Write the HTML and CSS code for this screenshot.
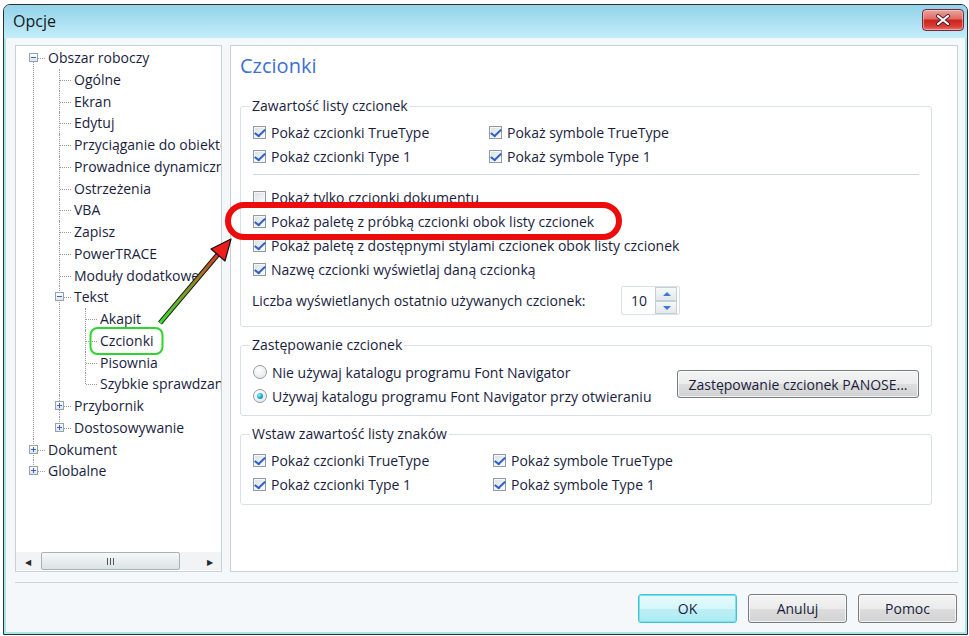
FILE: index.html
```html
<!DOCTYPE html>
<html lang="pl">
<head>
  <meta charset="UTF-8" />
  <title>Opcje</title>
  <link rel="stylesheet" href="styles.css">
</head>
<body>

  <div class="window">
    <div class="titlebar">
      <span class="title">Opcje</span>
      <button class="close-btn" aria-label="Zamknij">
        <svg width="16" height="12" viewBox="0 0 16 12">
          <path d="M3 2 L13 10 M13 2 L3 10" stroke="#4a2030" stroke-width="4" stroke-linecap="round"/>
          <path d="M3 2 L13 10 M13 2 L3 10" stroke="#ffffff" stroke-width="2.2" stroke-linecap="round"/>
        </svg>
      </button>
    </div>

    <div class="client">
      <div class="panes">

        <!-- Drzewo kategorii -->
        <div class="tree-panel">
          <div class="tree-view">
            <ul class="tree">
              <li>
                <div class="row"><span class="exp minus"></span>Obszar roboczy</div>
                <ul>
                  <li><div class="row">Ogólne</div></li>
                  <li><div class="row">Ekran</div></li>
                  <li><div class="row">Edytuj</div></li>
                  <li><div class="row">Przyciąganie do obiektów</div></li>
                  <li><div class="row">Prowadnice dynamiczne</div></li>
                  <li><div class="row">Ostrzeżenia</div></li>
                  <li><div class="row">VBA</div></li>
                  <li><div class="row">Zapisz</div></li>
                  <li><div class="row">PowerTRACE</div></li>
                  <li><div class="row">Moduły dodatkowe</div></li>
                  <li>
                    <div class="row"><span class="exp minus"></span>Tekst</div>
                    <ul>
                      <li><div class="row">Akapit</div></li>
                      <li><div class="row">Czcionki</div></li>
                      <li><div class="row">Pisownia</div></li>
                      <li><div class="row">Szybkie sprawdzanie</div></li>
                    </ul>
                  </li>
                  <li><div class="row"><span class="exp plus"></span>Przybornik</div></li>
                  <li><div class="row"><span class="exp plus"></span>Dostosowywanie</div></li>
                </ul>
              </li>
              <li><div class="row"><span class="exp plus"></span>Dokument</div></li>
              <li><div class="row"><span class="exp plus"></span>Globalne</div></li>
            </ul>
          </div>
          <div class="hscroll">
            <span class="arrow">&#9664;</span>
            <span class="thumb"><span class="grip"></span></span>
            <span class="arrow right">&#9654;</span>
          </div>
        </div>

        <!-- Strona ustawień -->
        <div class="page">
          <h1>Czcionki</h1>

          <fieldset class="group">
            <legend>Zawartość listy czcionek</legend>
            <div class="check-grid">
              <label class="check on"><span class="box"></span>Pokaż czcionki TrueType</label>
              <label class="check on"><span class="box"></span>Pokaż symbole TrueType</label>
              <label class="check on"><span class="box"></span>Pokaż czcionki Type 1</label>
              <label class="check on"><span class="box"></span>Pokaż symbole Type 1</label>
            </div>
            <div class="divider"></div>
            <label class="check"><span class="box"></span>Pokaż tylko czcionki dokumentu</label>
            <label class="check on"><span class="box"></span>Pokaż paletę z próbką czcionki obok listy czcionek</label>
            <label class="check on"><span class="box"></span>Pokaż paletę z dostępnymi stylami czcionek obok listy czcionek</label>
            <label class="check on"><span class="box"></span>Nazwę czcionki wyświetlaj daną czcionką</label>
            <div class="count-row">
              <span class="count-label">Liczba wyświetlanych ostatnio używanych czcionek:</span>
              <div class="spinner">
                <span class="spin-value">10</span>
                <div class="spin-buttons">
                  <span class="spin up"></span>
                  <span class="spin down"></span>
                </div>
              </div>
            </div>
          </fieldset>

          <fieldset class="group">
            <legend>Zastępowanie czcionek</legend>
            <div class="subst-row">
              <div class="radios">
                <label class="radio"><span class="dot"></span>Nie używaj katalogu programu Font Navigator</label>
                <label class="radio on"><span class="dot"></span>Używaj katalogu programu Font Navigator przy otwieraniu</label>
              </div>
              <button class="btn panose">Zastępowanie czcionek PANOSE...</button>
            </div>
          </fieldset>

          <fieldset class="group">
            <legend>Wstaw zawartość listy znaków</legend>
            <div class="check-grid wide">
              <label class="check on"><span class="box"></span>Pokaż czcionki TrueType</label>
              <label class="check on"><span class="box"></span>Pokaż symbole TrueType</label>
              <label class="check on"><span class="box"></span>Pokaż czcionki Type 1</label>
              <label class="check on"><span class="box"></span>Pokaż symbole Type 1</label>
            </div>
          </fieldset>
        </div>
      </div>

      <div class="separator"></div>

      <div class="buttons">
        <button class="btn default">OK</button>
        <button class="btn">Anuluj</button>
        <button class="btn">Pomoc</button>
      </div>
    </div>
  </div>

  <!-- Adnotacje na zrzucie -->
  <svg class="marks" width="969" height="636" viewBox="0 0 969 636">
    <defs>
      <linearGradient id="arrowGrad" x1="160" y1="323" x2="222" y2="250" gradientUnits="userSpaceOnUse">
        <stop offset="0" stop-color="#38e02a"/>
        <stop offset="0.55" stop-color="#8c8a26"/>
        <stop offset="1" stop-color="#e0301c"/>
      </linearGradient>
    </defs>
    <rect x="228" y="205" width="391" height="32" rx="16" fill="none" stroke="#ec0c0c" stroke-width="6"/>
    <rect x="90.5" y="328" width="72" height="26" rx="7" fill="none" stroke="#30d42e" stroke-width="2"/>
    <line x1="160" y1="323" x2="220" y2="252" stroke="#111" stroke-width="5"/>
    <line x1="160" y1="323" x2="220" y2="252" stroke="url(#arrowGrad)" stroke-width="3"/>
    <polygon points="231,239 225,261 211,249" fill="#ee1c1c" stroke="#111" stroke-width="1.2" stroke-linejoin="round"/>
  </svg>

</body>
</html>
```

FILE: styles.css
```css
* {
  margin: 0;
  padding: 0;
  box-sizing: border-box;
}

body {
  background: #ffffff;
  font-family: 'Open Sans', 'Noto Sans', sans-serif;
  font-size: 14px;
  color: #1a1d3e;
  width: 969px;
  height: 636px;
  overflow: hidden;
  position: relative;
}

/* Okno */
.window {
  margin: 4px 0 0 3px;
  width: 965px;
  height: 631px;
  border: 1px solid #2a3034;
  border-radius: 7px 7px 0 0;
  background: #a9e6ec;
  display: flex;
  flex-direction: column;
}

.titlebar {
  height: 33px;
  flex: none;
  border-radius: 6px 6px 0 0;
  background: linear-gradient(#92d3ea, #c3edf9);
  display: flex;
  align-items: center;
  justify-content: space-between;
  padding: 0 3px 0 9px;
}

.title {
  font-size: 16px;
  color: #15191c;
  margin-top: -1px;
}

.close-btn {
  width: 42px;
  height: 22px;
  margin-top: -4px;
  border: 1px solid #6e2a44;
  border-radius: 4px;
  background: linear-gradient(#eca49c 0%, #de6a60 45%, #c8241c 50%, #d83a34 80%, #f0705e 100%);
  box-shadow: inset 0 0 0 1px rgba(255, 220, 220, 0.5);
  display: flex;
  align-items: center;
  justify-content: center;
}

.client {
  flex: 1;
  margin: 0 2px 2px 2px;
  background: #f4f8fa;
  padding: 7px 7px 0 9px;
  display: flex;
  flex-direction: column;
}

.panes {
  display: flex;
  gap: 8px;
  height: 527px;
}

/* Drzewo */
.tree-panel {
  width: 207px;
  background: #fff;
  border: 1px solid #c6d2d6;
  display: flex;
  flex-direction: column;
}

.tree-view {
  flex: 1;
  overflow: hidden;
  padding: 1px 0 0 8px;
  white-space: nowrap;
}

.tree,
.tree ul {
  list-style: none;
}

.tree ul {
  margin-left: 2px;
}

.tree li {
  position: relative;
  padding-left: 24px;
}

.tree li::before {
  content: "";
  position: absolute;
  left: 9px;
  top: 0;
  bottom: 0;
  border-left: 1px dotted #9a9a9a;
}

.tree li:last-child::before {
  bottom: auto;
  height: 11px;
}

.tree > li:first-child::before {
  top: 11px;
}

.tree li::after {
  content: "";
  position: absolute;
  left: 10px;
  top: 11px;
  width: 11px;
  border-top: 1px dotted #9a9a9a;
}

.row {
  height: 21.75px;
  line-height: 21.75px;
}

.exp {
  position: absolute;
  left: 5px;
  top: 6px;
  width: 9px;
  height: 9px;
  border: 1px solid #95a3ab;
  background: linear-gradient(#ffffff, #dde4e8);
  z-index: 1;
}

.exp::before {
  content: "";
  position: absolute;
  left: 1px;
  top: 3px;
  width: 5px;
  height: 1px;
  background: #3a62c4;
}

.exp.plus::after {
  content: "";
  position: absolute;
  left: 3px;
  top: 1px;
  width: 1px;
  height: 5px;
  background: #3a62c4;
}

.hscroll {
  height: 18px;
  flex: none;
  margin-bottom: 1px;
  background: #f1f3f4;
  display: flex;
  align-items: center;
}

.arrow {
  width: 23px;
  text-align: center;
  font-size: 8px;
  color: #2a2a2a;
}

.arrow.right {
  margin-left: auto;
}

.thumb {
  width: 139px;
  height: 18px;
  margin-left: 2px;
  border: 1px solid #a6b1b8;
  border-radius: 2px;
  background: linear-gradient(#f6f8f9, #dce2e5);
  display: flex;
  align-items: center;
  justify-content: center;
}

.grip {
  width: 7px;
  height: 7px;
  border-left: 1px solid #555;
  border-right: 1px solid #555;
  position: relative;
}

.grip::after {
  content: "";
  position: absolute;
  left: 2px;
  top: 0;
  height: 7px;
  border-left: 1px solid #555;
}

/* Strona */
.page {
  width: 728px;
  background: #fff;
  border: 1px solid #c6d2d6;
  padding: 6px 0 0 9px;
}

h1 {
  font-size: 20px;
  font-weight: normal;
  color: #3a6fd8;
  line-height: 28px;
  margin-bottom: 17px;
}

.group {
  width: 692px;
  border: 1px solid #d6e2e6;
  border-radius: 3px;
  padding: 5px 12px 11px 12px;
}

.group + .group {
  margin-top: 9px;
}

.group:nth-of-type(2) {
  padding: 6px 12px 7px 12px;
}

.group:nth-of-type(3) {
  padding: 5px 12px 8px 12px;
}

legend {
  line-height: 18px;
  padding: 0 2px;
  margin-left: -3px;
}

.check-grid {
  display: grid;
  grid-template-columns: 236px auto;
}

.check-grid.wide {
  grid-template-columns: 240px auto;
}

.check,
.radio {
  height: 24px;
  display: flex;
  align-items: center;
  gap: 5px;
}

.box {
  width: 13px;
  height: 13px;
  flex: none;
  border: 1px solid #8f9aa3;
  background: linear-gradient(135deg, #dadfe2, #fbfcfc);
  box-shadow: inset 0 0 0 1px #f4f6f7;
  position: relative;
}

.check.on .box::after {
  content: "";
  position: absolute;
  left: 3px;
  top: 0px;
  width: 4px;
  height: 8px;
  border-right: 2px solid #2f5fc8;
  border-bottom: 2px solid #2f5fc8;
  transform: rotate(38deg) skewX(-8deg);
}

.divider {
  height: 1px;
  background: #cfd8dc;
  margin: 6px 0 10px 0;
}

.count-row {
  display: flex;
  align-items: center;
  margin-top: 5px;
  height: 29px;
}

.count-label {
  width: 369px;
  margin-left: -1px;
}

.spinner {
  width: 59px;
  height: 29px;
  border: 1px solid #d7e0e4;
  border-radius: 2px;
  display: flex;
  align-items: center;
  padding: 1px 2px 1px 9px;
}

.spin-value {
  flex: 1;
}

.spin-buttons {
  width: 22px;
  height: 27px;
  display: flex;
  flex-direction: column;
}

.spin {
  flex: 1;
  border: 1px solid #c5d0d6;
  background: linear-gradient(#f6f8f9, #e2e8eb);
  position: relative;
}

.spin::after {
  content: "";
  position: absolute;
  left: 7px;
  top: 4px;
  border-left: 4px solid transparent;
  border-right: 4px solid transparent;
}

.spin.up::after {
  border-bottom: 4px solid #3d78d8;
}

.spin.down::after {
  border-top: 4px solid #3d78d8;
}

.subst-row {
  display: flex;
  align-items: center;
}

.radios {
  flex: 1;
}

.dot {
  width: 14px;
  height: 14px;
  flex: none;
  border: 1px solid #929ea6;
  border-radius: 50%;
  background: radial-gradient(circle at 40% 35%, #ffffff, #dfe4e7);
  position: relative;
}

.radio.on .dot::after {
  content: "";
  position: absolute;
  left: 3px;
  top: 3px;
  width: 6px;
  height: 6px;
  border-radius: 50%;
  background: radial-gradient(circle at 35% 35%, #8ef2ff, #0f9fc8 60%, #0b5e8c);
}

/* Przyciski */
.btn {
  font-family: inherit;
  font-size: 14px;
  color: #1a1d3e;
  height: 29px;
  border: 1px solid #767c80;
  border-radius: 3px;
  background: linear-gradient(#f4f4f4 0%, #ebebeb 50%, #dddddd 51%, #d2d2d2 100%);
  box-shadow: inset 0 0 0 1px rgba(255, 255, 255, 0.7);
}

.panose {
  width: 242px;
  height: 28px;
}

.separator {
  height: 1px;
  background: #cbd6da;
  margin-top: 10px;
}

.buttons {
  display: flex;
  justify-content: flex-end;
  gap: 11px;
  margin-top: 11px;
  padding-right: 1px;
}

.buttons .btn {
  width: 99px;
}

.btn.default {
  border-color: #3cc6d8;
  background: linear-gradient(#e8fbfd 0%, #d4f6fa 50%, #bdeff5 51%, #aeeaf2 100%);
  box-shadow: inset 0 0 0 1px #7fe0ec;
}

/* Adnotacje */
.marks {
  position: absolute;
  left: 0;
  top: 0;
  pointer-events: none;
}
```
